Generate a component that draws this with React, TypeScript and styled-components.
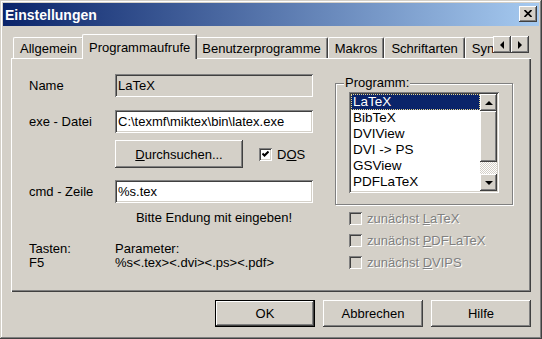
import React from "react";
import styled, { createGlobalStyle, css } from "styled-components";

const FACE = "#d4d0c8";

const GlobalStyle = createGlobalStyle`
  html, body { margin: 0; padding: 0; background: ${FACE}; }
  body {
    font-family: "Liberation Sans", Arial, sans-serif;
    font-size: 13px;
    color: #000;
  }
  * { box-sizing: border-box; }
`;

const raised = css`
  box-shadow: inset -1px -1px #404040, inset 1px 1px #fff,
    inset -2px -2px #808080, inset 2px 2px ${FACE};
`;

const sunken = css`
  box-shadow: inset 1px 1px #808080, inset -1px -1px #fff,
    inset 2px 2px #404040, inset -2px -2px ${FACE};
`;

const Window = styled.div`
  width: 542px;
  height: 339px;
  padding: 3px;
  background: ${FACE};
  display: flex;
  flex-direction: column;
  box-shadow: inset -1px -1px #404040, inset 1px 1px ${FACE},
    inset -2px -2px #808080, inset 2px 2px #fff;
`;

const TitleBar = styled.div`
  height: 23px;
  display: flex;
  align-items: center;
  justify-content: space-between;
  padding: 0 2px 0 2px;
  background: linear-gradient(to right, #0a246a, #a6caf0);
  color: #fff;
  font-weight: bold;
  font-size: 14px;
`;

const CloseButton = styled.div`
  width: 18px;
  height: 16px;
  margin-top: -2px;
  background: ${FACE};
  display: flex;
  align-items: center;
  justify-content: center;
  ${raised}
`;

const Body = styled.div`
  display: flex;
  flex-direction: column;
  padding: 8px 8px 0 8px;
`;

const TabRow = styled.div`
  height: 25px;
  margin-bottom: -1px;
  display: flex;
  position: relative;
  z-index: 1;
`;

const TabsClip = styled.div`
  flex: 1;
  display: flex;
  align-items: flex-end;
  overflow: hidden;
  padding-left: 2px;
`;

const Tab = styled.div<{ $active?: boolean }>`
  flex: none;
  height: ${(p) => (p.$active ? 25 : 21)}px;
  margin: ${(p) => (p.$active ? "0 -2px" : "0 0 1px 0")};
  padding: 0 6px;
  display: flex;
  align-items: center;
  white-space: nowrap;
  background: ${FACE};
  border-top: 1px solid #fff;
  border-left: 1px solid #fff;
  border-right: 1px solid #404040;
  border-radius: 2px 2px 0 0;
  box-shadow: inset -1px 0 #808080;
  position: relative;
  z-index: ${(p) => (p.$active ? 1 : 0)};
`;

const Arrows = styled.div`
  display: flex;
  align-self: flex-start;
  margin: 2px 2px 0 0;
`;

const SmallButton = styled.div<{ $w: number; $h: number }>`
  width: ${(p) => p.$w}px;
  height: ${(p) => p.$h}px;
  flex: none;
  background: ${FACE};
  display: flex;
  align-items: center;
  justify-content: center;
  ${raised}
`;

const Panel = styled.div`
  height: 234px;
  display: flex;
  padding: 16px 18px 0 18px;
  background: ${FACE};
  box-shadow: inset 1px 1px #fff, inset -1px -1px #404040,
    inset -2px -2px #808080;
`;

const LeftCol = styled.div`
  width: 284px;
  display: flex;
  flex-direction: column;
`;

const FormRow = styled.div<{ $mt?: number }>`
  display: grid;
  grid-template-columns: 86px 198px;
  align-items: center;
  margin-top: ${(p) => p.$mt ?? 0}px;
`;

const Field = styled.div<{ $readOnly?: boolean }>`
  height: 23px;
  padding: 0 3px;
  display: flex;
  align-items: center;
  white-space: nowrap;
  background: ${(p) => (p.$readOnly ? FACE : "#fff")};
  ${sunken}
`;

const BrowseLine = styled.div`
  display: flex;
  align-items: center;
  gap: 16px;
`;

const PushButton = styled.div<{ $w: number; $h: number; $default?: boolean }>`
  width: ${(p) => p.$w}px;
  height: ${(p) => p.$h}px;
  display: flex;
  align-items: center;
  justify-content: center;
  background: ${FACE};
  ${(p) =>
    p.$default
      ? css`
          box-shadow: inset 0 0 0 1px #000, inset -2px -2px #404040,
            inset 2px 2px #fff, inset -3px -3px #808080;
        `
      : raised}
`;

const Hint = styled.div`
  grid-column: 2;
  text-align: center;
  line-height: 15px;
`;

const InfoGrid = styled.div`
  display: grid;
  grid-template-columns: 86px 1fr;
  line-height: 14px;
  margin-top: 17px;
`;

const RightCol = styled.div`
  width: 178px;
  margin-left: 22px;
  margin-top: 9px;
  display: flex;
  flex-direction: column;
`;

const GroupBox = styled.div`
  display: flex;
  flex-direction: column;
  padding: 0 13px 11px 13px;
  border: 1px solid #808080;
  box-shadow: inset 1px 1px #fff, 1px 1px #fff;
`;

const Legend = styled.div`
  align-self: flex-start;
  margin: -9px 0 0 -5px;
  padding: 0 1px;
  line-height: 15px;
  background: ${FACE};
`;

const ListBox = styled.div`
  width: 150px;
  height: 101px;
  margin-top: 2px;
  padding: 2px;
  display: flex;
  background: #fff;
  ${sunken}
`;

const Items = styled.div`
  flex: 1;
  overflow: hidden;
  font-size: 13.5px;
`;

const Item = styled.div<{ $selected?: boolean }>`
  height: 16px;
  line-height: 16px;
  padding-left: 2px;
  white-space: nowrap;
  background: ${(p) => (p.$selected ? "#0a246a" : "#fff")};
  color: ${(p) => (p.$selected ? "#fff" : "#000")};
  outline: ${(p) => (p.$selected ? "1px dotted #e8d890" : "none")};
  outline-offset: -1px;
`;

const ScrollBar = styled.div`
  width: 17px;
  display: flex;
  flex-direction: column;
`;

const Track = styled.div`
  flex: 1;
  background: repeating-conic-gradient(#fff 0 25%, ${FACE} 0 50%) 0 0 / 2px
    2px;
`;

const CheckList = styled.div`
  display: flex;
  flex-direction: column;
  gap: 6px;
  margin-top: 5px;
  padding-left: 14px;
`;

const CheckRow = styled.div<{ $disabled?: boolean }>`
  height: 16px;
  display: flex;
  align-items: center;
  gap: 5px;
  white-space: nowrap;
  color: ${(p) => (p.$disabled ? "#808080" : "#000")};
  text-shadow: ${(p) => (p.$disabled ? "1px 1px 0 #fff" : "none")};
`;

const Box = styled.div<{ $disabled?: boolean }>`
  width: 13px;
  height: 13px;
  flex: none;
  display: flex;
  align-items: center;
  justify-content: center;
  background: ${(p) => (p.$disabled ? FACE : "#fff")};
  ${sunken}
`;

const ButtonRow = styled.div`
  display: flex;
  justify-content: flex-end;
  gap: 8px;
  margin-top: 8px;
`;

const Triangle = ({ dir }: { dir: "left" | "right" | "up" | "down" }) => {
  const pts = {
    left: "4,0 4,8 0,4",
    right: "0,0 0,8 4,4",
    up: "0,4 8,4 4,0",
    down: "0,0 8,0 4,4",
  }[dir];
  const horiz = dir === "left" || dir === "right";
  return (
    <svg width={horiz ? 4 : 8} height={horiz ? 8 : 4} viewBox={horiz ? "0 0 4 8" : "0 0 8 4"}>
      <polygon points={pts} fill="#000" />
    </svg>
  );
};

const CheckBox = ({ checked, disabled }: { checked?: boolean; disabled?: boolean }) => (
  <Box $disabled={disabled}>
    {checked && (
      <svg width="7" height="7" viewBox="0 0 7 7">
        <path d="M0.5 2.5 L2.5 4.5 L6.5 0.5" stroke="#000" strokeWidth="2" fill="none" />
      </svg>
    )}
  </Box>
);

const programs = ["LaTeX", "BibTeX", "DVIView", "DVI -> PS", "GSView", "PDFLaTeX"];

export default function App() {
  return (
    <>
      <GlobalStyle />
      <Window>
        <TitleBar>
          <span>Einstellungen</span>
          <CloseButton>
            <svg width="8" height="7" viewBox="0 0 8 7">
              <path d="M0.5 0 L7.5 7 M7.5 0 L0.5 7" stroke="#000" strokeWidth="1.7" />
            </svg>
          </CloseButton>
        </TitleBar>
        <Body>
          <TabRow>
            <TabsClip>
              <Tab>Allgemein</Tab>
              <Tab $active>Programmaufrufe</Tab>
              <Tab>Benutzerprogramme</Tab>
              <Tab>Makros</Tab>
              <Tab>Schriftarten</Tab>
              <Tab>Syntax</Tab>
            </TabsClip>
            <Arrows>
              <SmallButton $w={18} $h={17}>
                <Triangle dir="left" />
              </SmallButton>
              <SmallButton $w={18} $h={17}>
                <Triangle dir="right" />
              </SmallButton>
            </Arrows>
          </TabRow>
          <Panel>
            <LeftCol>
              <FormRow>
                <span>Name</span>
                <Field $readOnly>LaTeX</Field>
              </FormRow>
              <FormRow $mt={13}>
                <span>exe - Datei</span>
                <Field>C:\texmf\miktex\bin\latex.exe</Field>
              </FormRow>
              <FormRow $mt={7}>
                <span />
                <BrowseLine>
                  <PushButton $w={128} $h={28}>
                    <span>
                      <u>D</u>urchsuchen...
                    </span>
                  </PushButton>
                  <CheckRow>
                    <CheckBox checked />
                    <span>
                      D<u>O</u>S
                    </span>
                  </CheckRow>
                </BrowseLine>
              </FormRow>
              <FormRow $mt={12}>
                <span>cmd - Zeile</span>
                <Field>%s.tex</Field>
              </FormRow>
              <FormRow $mt={7}>
                <Hint>Bitte Endung mit eingeben!</Hint>
              </FormRow>
              <InfoGrid>
                <span>Tasten:</span>
                <span>Parameter:</span>
                <span>F5</span>
                <span>%s&lt;.tex&gt;&lt;.dvi&gt;&lt;.ps&gt;&lt;.pdf&gt;</span>
              </InfoGrid>
            </LeftCol>
            <RightCol>
              <GroupBox>
                <Legend>Programm:</Legend>
                <ListBox>
                  <Items>
                    {programs.map((p, i) => (
                      <Item key={p} $selected={i === 0}>
                        {p}
                      </Item>
                    ))}
                  </Items>
                  <ScrollBar>
                    <SmallButton $w={17} $h={17}>
                      <Triangle dir="up" />
                    </SmallButton>
                    <SmallButton $w={17} $h={51} />
                    <Track />
                    <SmallButton $w={17} $h={17}>
                      <Triangle dir="down" />
                    </SmallButton>
                  </ScrollBar>
                </ListBox>
              </GroupBox>
              <CheckList>
                <CheckRow $disabled>
                  <CheckBox disabled />
                  <span>
                    zunächst <u>L</u>aTeX
                  </span>
                </CheckRow>
                <CheckRow $disabled>
                  <CheckBox disabled />
                  <span>
                    zunächst <u>P</u>DFLaTeX
                  </span>
                </CheckRow>
                <CheckRow $disabled>
                  <CheckBox disabled />
                  <span>
                    zunächst <u>D</u>VIPS
                  </span>
                </CheckRow>
              </CheckList>
            </RightCol>
          </Panel>
          <ButtonRow>
            <PushButton $w={100} $h={27} $default>
              OK
            </PushButton>
            <PushButton $w={100} $h={27}>
              Abbrechen
            </PushButton>
            <PushButton $w={100} $h={27}>
              Hilfe
            </PushButton>
          </ButtonRow>
        </Body>
      </Window>
    </>
  );
}
